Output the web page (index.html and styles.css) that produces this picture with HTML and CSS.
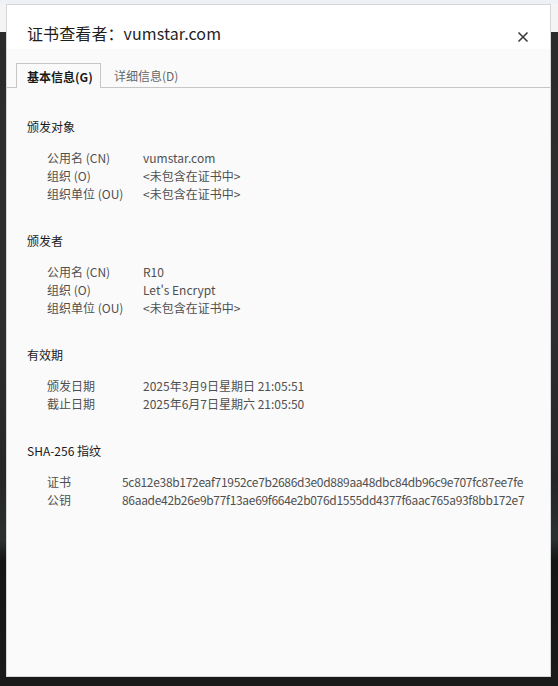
FILE: index.html
```html
<!DOCTYPE html>
<html lang="zh-CN">
<head>
<meta charset="utf-8">
<title>证书查看者</title>
<link rel="stylesheet" href="styles.css">
</head>
<body>
<div class="dialog">
  <div class="dialog-header">
    <h1 class="dialog-title">证书查看者：vumstar.com</h1>
    <button class="close-btn" aria-label="关闭">
      <svg width="12" height="12" viewBox="0 0 12 12"><path d="M1.5 1.5 L10.5 10.5 M10.5 1.5 L1.5 10.5" stroke="#3c3c3c" stroke-width="1.6" fill="none"/></svg>
    </button>
  </div>
  <div class="dialog-body">
    <div class="tabs">
      <div class="tab tab-active">基本信息(G)</div>
      <div class="tab">详细信息(D)</div>
    </div>
    <div class="content">
      <section class="section">
        <h2 class="section-title">颁发对象</h2>
        <div class="rows">
          <div class="label">公用名 (CN)</div><div class="value">vumstar.com</div>
          <div class="label">组织 (O)</div><div class="value">&lt;未包含在证书中&gt;</div>
          <div class="label">组织单位 (OU)</div><div class="value">&lt;未包含在证书中&gt;</div>
        </div>
      </section>
      <section class="section">
        <h2 class="section-title">颁发者</h2>
        <div class="rows">
          <div class="label">公用名 (CN)</div><div class="value">R10</div>
          <div class="label">组织 (O)</div><div class="value">Let's Encrypt</div>
          <div class="label">组织单位 (OU)</div><div class="value">&lt;未包含在证书中&gt;</div>
        </div>
      </section>
      <section class="section">
        <h2 class="section-title">有效期</h2>
        <div class="rows">
          <div class="label">颁发日期</div><div class="value">2025年3月9日星期日 21:05:51</div>
          <div class="label">截止日期</div><div class="value">2025年6月7日星期六 21:05:50</div>
        </div>
      </section>
      <section class="section">
        <h2 class="section-title">SHA-256 指纹</h2>
        <div class="rows rows-narrow">
          <div class="label">证书</div><div class="value hash">5c812e38b172eaf71952ce7b2686d3e0d889aa48dbc84db96c9e707fc87ee7fe</div>
          <div class="label">公钥</div><div class="value hash">86aade42b26e9b77f13ae69f664e2b076d1555dd4377f6aac765a93f8bb172e7</div>
        </div>
      </section>
    </div>
  </div>
</div>
</body>
</html>
```
FILE: styles.css
```css
html, body {
  margin: 0;
  padding: 0;
}
body {
  width: 558px;
  height: 686px;
  overflow: hidden;
  position: relative;
  font-family: "Noto Sans CJK SC", sans-serif;
  background:
    linear-gradient(to bottom, #eef1f6 0, #eef1f6 4px, #f4f4f4 4px, #f4f4f4 32px, transparent 32px),
    linear-gradient(to bottom, #2b2b2b 0, #2f2d30 300px, #262628 480px, #2a3030 540px, #151515 560px, #1a1a1a 686px);
}
.dialog {
  position: absolute;
  left: 6px;
  top: 4px;
  width: 543px;
  height: 671px;
  border: 1px solid #d6d6d6;
  background: #fafafa;
  display: flex;
  flex-direction: column;
}
.dialog-header {
  height: 44px;
  background: #ffffff;
  display: flex;
  align-items: center;
  justify-content: space-between;
  padding: 0 21px 0 20px;
}
.dialog-title {
  margin: 12px 0 0 0;
  font-size: 16px;
  font-weight: normal;
  color: #1f1f1f;
  letter-spacing: 0.1px;
}
.close-btn {
  margin-top: 19px;
  border: none;
  background: none;
  padding: 0;
  width: 12px;
  height: 12px;
  display: flex;
}
.dialog-body {
  flex: 1;
  padding-top: 14px;
}
.tabs {
  display: flex;
  align-items: flex-end;
  height: 24px;
  border-bottom: 1px solid #c6c6c6;
  padding-left: 9px;
  gap: 3px;
}
.tab {
  height: 24px;
  box-sizing: border-box;
  padding: 0 10px;
  font-size: 12px;
  line-height: 26px;
  color: #666;
  white-space: nowrap;
}
.tab-active {
  border: 1px solid #c6c6c6;
  border-bottom: none;
  background: #fafafa;
  height: 25px;
  margin-bottom: -1px;
  font-weight: bold;
  color: #1a1a1a;
  width: 85px;
  padding: 0 0 0 10px;
}
.content {
  padding: 30px 20px 0 20px;
}
.section {
  margin-bottom: 29px;
}
.section-title {
  margin: 0 0 13px 0;
  font-size: 12px;
  line-height: 18px;
  font-weight: normal;
  color: #1a1a1a;
}
.rows {
  display: grid;
  grid-template-columns: 96px 1fr;
  padding-left: 20px;
  font-size: 12px;
  line-height: 18px;
  color: #505050;
}
.rows-narrow {
  grid-template-columns: 75px 1fr;
}
.value {
  white-space: nowrap;
}
.hash {
  letter-spacing: -0.31px;
}
```
